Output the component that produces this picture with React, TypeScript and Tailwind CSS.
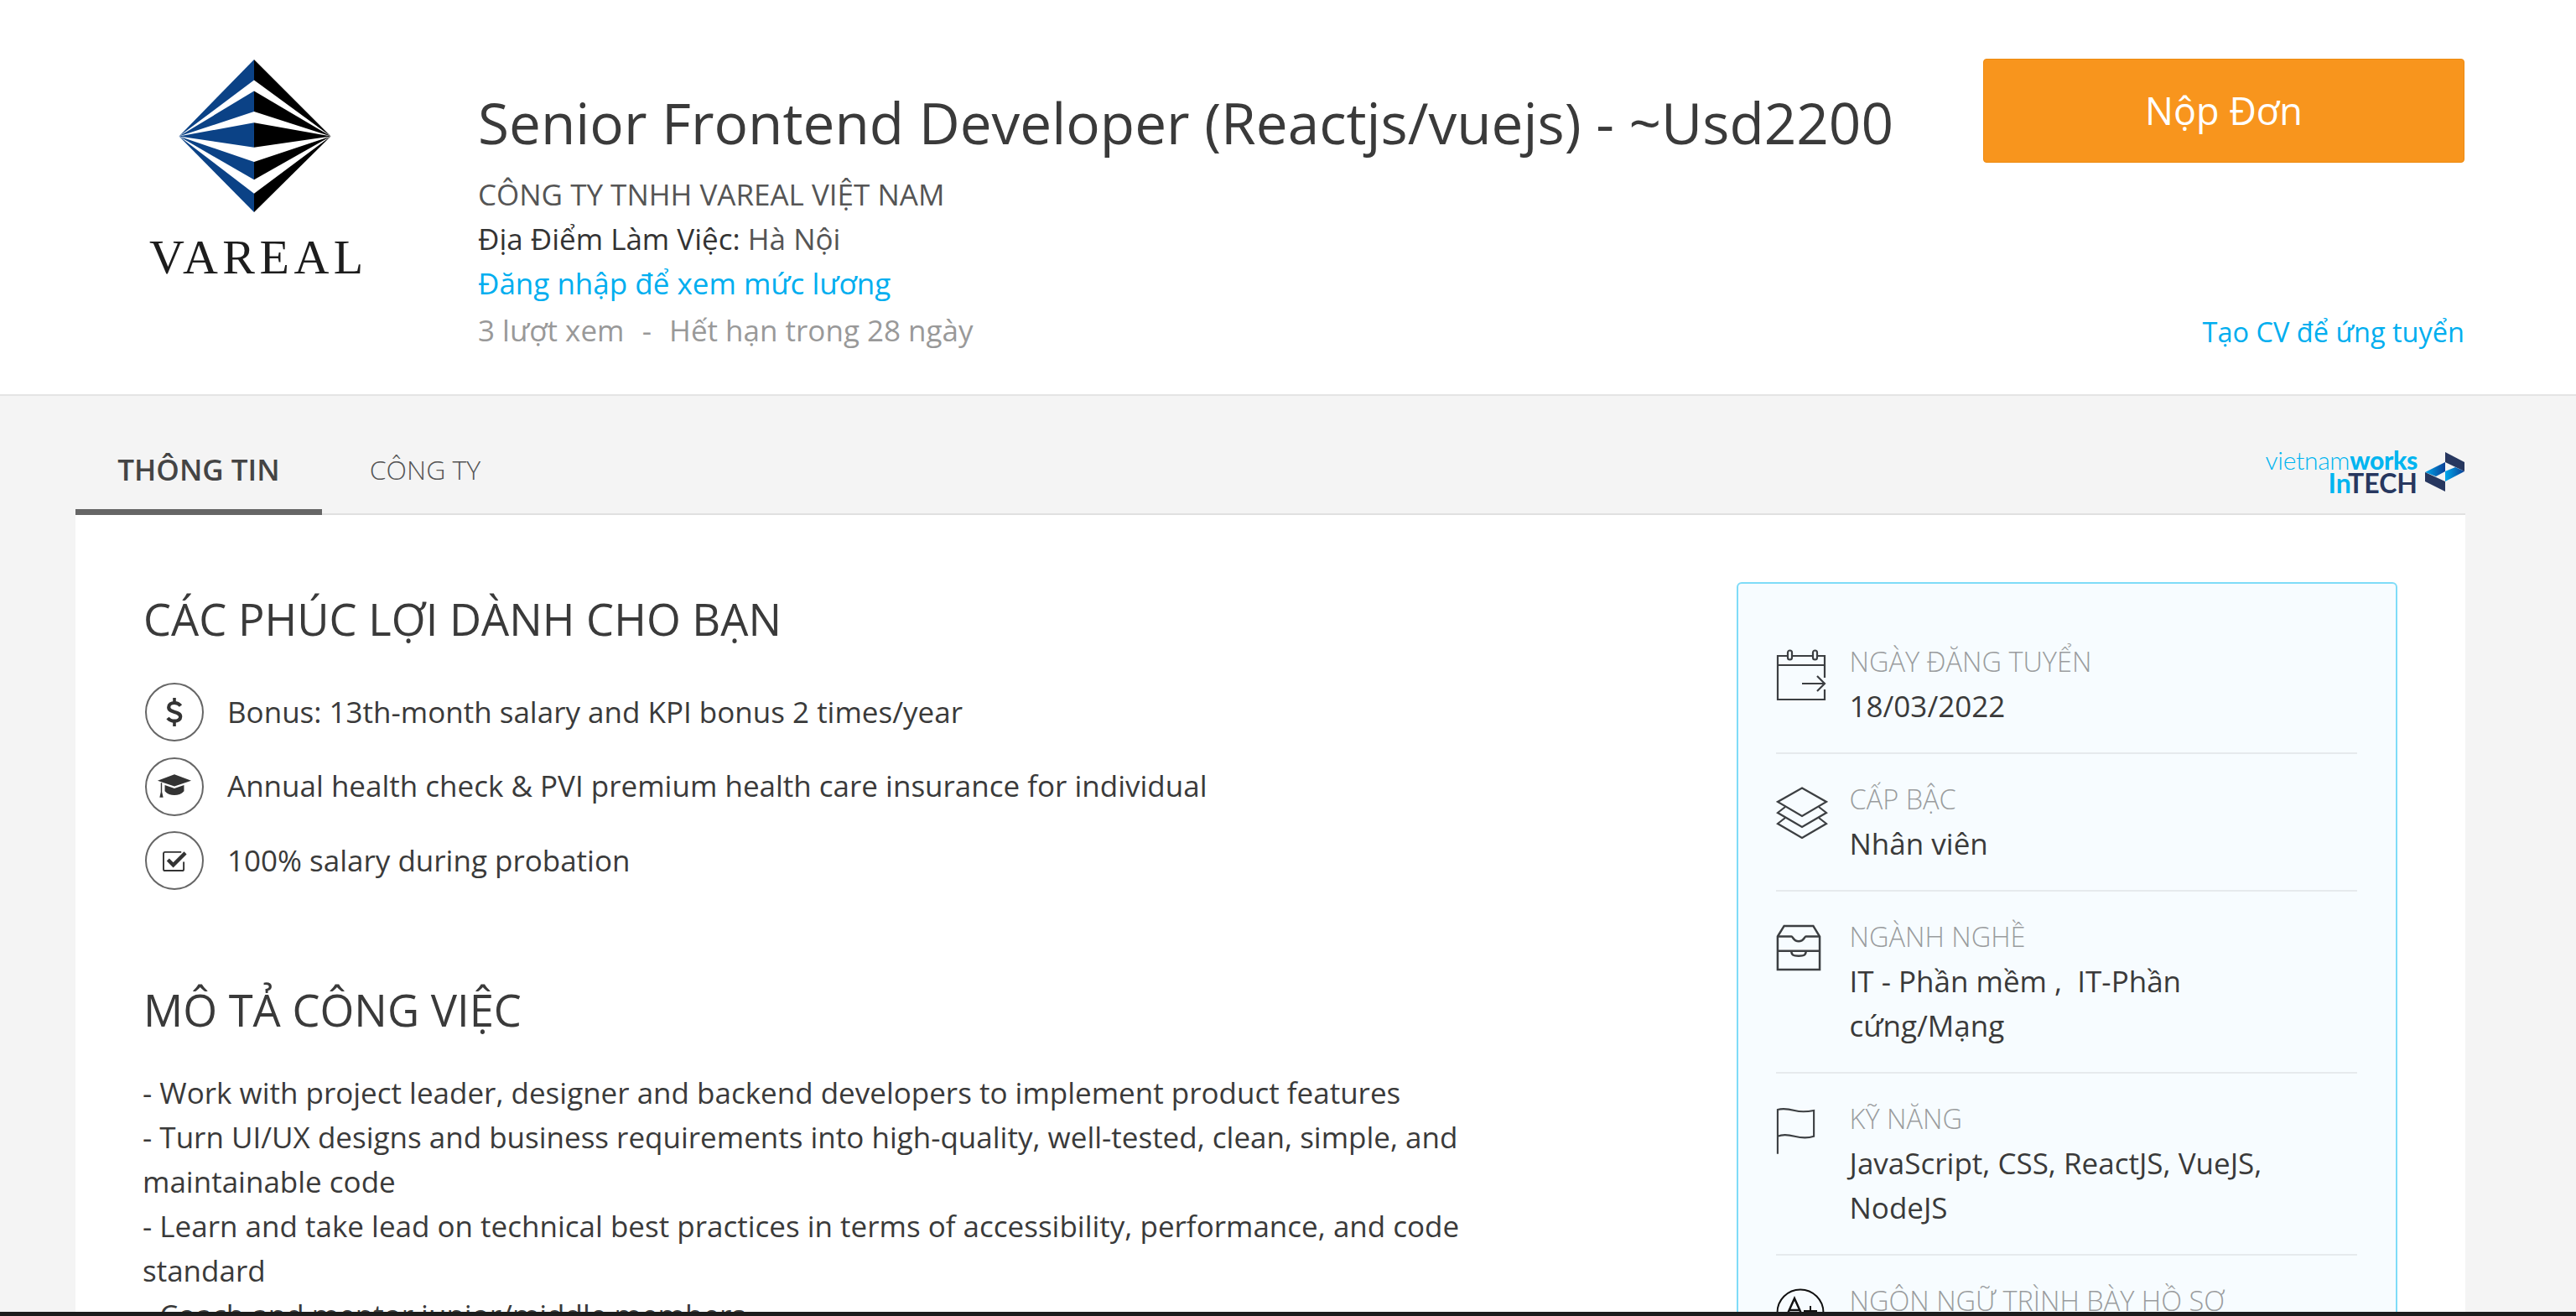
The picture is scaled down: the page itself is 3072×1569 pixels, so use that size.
import type { ReactNode } from "react";

const benefits = [
  { text: "Bonus: 13th-month salary and KPI bonus 2 times/year", icon: <DollarIcon /> },
  { text: "Annual health check & PVI premium health care insurance for individual", icon: <CapIcon /> },
  { text: "100% salary during probation", icon: <CheckIcon /> },
];

function DollarIcon() {
  return (
    <svg width="20" height="34" viewBox="0 0 20 34" fill="none" stroke="#333" strokeWidth="4.2">
      <path d="M10 0v6M10 28v6" strokeWidth="3.6" />
      <path d="M17.500 9.500C15.500 7 13 6 10 6 6 6 3.200 8 3.200 11.200c0 7 14 4.500 14 11.300 0 3.200-3 5.200-7.200 5.200-3.300 0-6-1.200-8-3.700" />
    </svg>
  );
}

function CapIcon() {
  return (
    <svg width="42" height="29" viewBox="0 0 44 30" fill="#333">
      <path d="M22 0 43 8 22 15 1 8z" />
      <path d="M10 13.500 22 17.500 34 13.500V21c-3 3.500-7.500 5-12 5s-9-1.500-12-5z" />
      <path d="M5 10.500h1.500V22l1.500 7H3.500l1.500-7z" />
    </svg>
  );
}

function CheckIcon() {
  return (
    <svg width="31" height="27" viewBox="0 0 32 28" fill="none">
      <path d="M27 15v9a2 2 0 0 1-2 2H4a2 2 0 0 1-2-2V5a2 2 0 0 1 2-2h20" stroke="#333" strokeWidth="2" />
      <path d="M7.500 12.500 14 19 29 4" stroke="#333" strokeWidth="4.500" />
    </svg>
  );
}

function CalendarIcon() {
  return (
    <svg width="60" height="62" viewBox="0 0 60 62" fill="none" stroke="#3c3f42" strokeWidth="2.200">
      <path d="M58 34V8H2v52h56V48" />
      <path d="M2 19h56" />
      <rect x="14" y="1.500" width="5" height="11" rx="2.500" fill="#f7fcff" />
      <rect x="44" y="1.500" width="5" height="11" rx="2.500" fill="#f7fcff" />
      <path d="M31 41h27M49 32l9 9-9 9" />
    </svg>
  );
}

function LayersIcon() {
  return (
    <svg width="62" height="62" viewBox="0 0 62 62" fill="none" stroke="#3c3f42" strokeWidth="2.200">
      <path d="M31 1.500 60 18 31 35 2 18z" />
      <path d="M11 24 2 31l29 17 29-17-9-7" />
      <path d="M11 37 2 44l29 17 29-17-9-7" />
    </svg>
  );
}

function DrawerIcon() {
  return (
    <svg width="54" height="56" viewBox="0 0 56 58" fill="none" stroke="#3c3f42" strokeWidth="2.600">
      <path d="M2 15 10 2h36l8 13v41H2z" />
      <path d="M2 15h17c2 0 2.500 6 9 6s7-6 9-6h17" />
      <path d="M2 33h52" />
      <path d="M19 33c0 5 2 6 9 6s9-1 9-6" />
    </svg>
  );
}

function FlagIcon() {
  return (
    <svg width="48" height="58" viewBox="0 0 50 58" fill="none" stroke="#3c3f42" strokeWidth="2.200">
      <path d="M2 58V3c7-2 13-1 21 1s13 2 24 0v32c-9 3-16 2-24 0S9 33 2 36" />
    </svg>
  );
}

function LanguageIcon() {
  return (
    <svg width="58" height="58" viewBox="0 0 58 58" fill="none" stroke="#111" strokeWidth="2">
      <circle cx="29" cy="29" r="27.500" />
      <path d="M13 32 22 12l9 20M16 26h12" strokeWidth="2.500" />
      <path d="M33 27h16M41 21v6M47 27c-2 7-8 12-14 14" />
    </svg>
  );
}

function VarealLogo() {
  return (
    <div className="flex w-[254px] flex-col">
      <svg className="ml-[37px]" width="182" height="182" viewBox="0 0 178 179">
        <path d="M88 0V24L0 90z" fill="#0b4286" />
        <path d="M88 37V61L0 90z" fill="#0b4286" />
        <path d="M88 74V103L0 90z" fill="#0b4286" />
        <path d="M88 120V141L0 90z" fill="#0b4286" />
        <path d="M88 157V179L0 90z" fill="#0b4286" />
        <path d="M88 0V24L178 90z" fill="#000" />
        <path d="M88 37V61L178 90z" fill="#000" />
        <path d="M88 74V103L178 90z" fill="#000" />
        <path d="M88 120V141L178 90z" fill="#000" />
        <path d="M88 157V179L178 90z" fill="#000" />
      </svg>
      <div className="mt-[30px] ml-[2px] font-['Liberation_Serif',serif] text-[58px] leading-[48px] tracking-[5.500px] whitespace-nowrap text-[#1d1d1d]">VAREAL</div>
    </div>
  );
}

function InTechLogo() {
  return (
    <div className="flex items-center gap-[9px]">
      <div className="flex flex-col items-end font-['Lato',sans-serif]">
        <div className="text-[30px] leading-[27px] tracking-[-0.01em] text-[#00b5f0]">
          <span className="font-light">vietnam</span>
          <span className="font-black">works</span>
        </div>
        <div className="text-[32px] leading-[28px] font-bold text-[#27375f]">
          <span className="text-[#00b5f0]">In</span>TECH
        </div>
      </div>
      <svg width="48" height="47" viewBox="0 0 48 47">
        <defs>
          <linearGradient id="band" x1="0" x2="1" y1="0" y2="0">
            <stop offset="0" stopColor="#00a8ec" />
            <stop offset="1" stopColor="#0b3f96" />
          </linearGradient>
        </defs>
        <path d="M24 0 47 12V23L24 12z" fill="#27375f" />
        <path d="M0 24 24 12V23L13 29z" fill="url(#band)" />
        <path d="M24 23 36 18 47 23 24 35z" fill="url(#band)" />
        <path d="M0 24 24 35V47L0 35z" fill="#27375f" />
      </svg>
    </div>
  );
}

function InfoRow({ icon, label, children, first }: { icon: ReactNode; label: string; children?: ReactNode; first?: boolean }) {
  return (
    <div className={`flex ${first ? "pb-[29px]" : "border-t-2 border-[#e6eaed] pt-[28px] pb-[29px]"}`}>
      <div className="w-[87.500px] shrink-0 pt-[11px]">{icon}</div>
      <div className="w-[570px]">
        <div className="text-[32.500px] leading-[52px] font-light whitespace-nowrap text-[#9a9c9e]">{label}</div>
        {children && <div className="text-[35px] leading-[53px] whitespace-pre-wrap text-[#3a3a3a]">{children}</div>}
      </div>
    </div>
  );
}

export default function App() {
  return (
    <div className="relative h-[1569px] overflow-hidden bg-[#f4f4f4] font-['Open_Sans',sans-serif] text-[#3a3a3a]">
      {/* Header */}
      <header className="flex h-[472px] border-b-2 border-[#e4e4e4] bg-white pr-[133px] pl-[176px]">
        <div className="pt-[71px]">
          <VarealLogo />
        </div>
        <div className="ml-[140px] flex-1 pt-[96px]">
          <h1 className="text-[67.500px] leading-[100px] whitespace-nowrap text-[#3a3a3a]">Senior Frontend Developer (Reactjs/vuejs) - ~Usd2200</h1>
          <div className="mt-[9px] text-[35px] leading-[53px] text-[#555]">CÔNG TY TNHH VAREAL VIỆT NAM</div>
          <div className="text-[35px] leading-[53px] text-[#333]">
            Địa Điểm Làm Việc: <span className="text-[#555]">Hà Nội</span>
          </div>
          <a className="block text-[35px] leading-[53px] text-[#00aeef]">Đăng nhập để xem mức lương</a>
          <div className="mt-[3px] text-[35px] leading-[53px] whitespace-pre text-[#999]">
            3 lượt xem<span className="mx-[3px]">  -  </span>Hết hạn trong 28 ngày
          </div>
        </div>
        <div className="flex w-[574px] shrink-0 flex-col pt-[70px]">
          <button className="h-[124px] w-full rounded-[4px] border border-[#ee8a0f] bg-[#f8951d] text-[45px] text-white">Nộp Đơn</button>
          <a className="mt-[180px] text-right text-[32.500px] leading-[44px] text-[#00aeef]">Tạo CV để ứng tuyển</a>
        </div>
      </header>

      {/* Tabs */}
      <div className="mx-[90px] mt-[54px] w-[2850px]">
        <div className="relative -mb-[2px] flex h-[88px] items-stretch justify-between">
          <div className="flex">
            <div className="flex w-[294px] items-center justify-center border-b-[7px] border-[#666] pb-[12px] text-[35px] font-semibold text-[#444]">THÔNG TIN</div>
            <div className="flex w-[246px] items-center justify-center pb-[21px] text-[32px] font-light text-[#555]">CÔNG TY</div>
          </div>
          <div className="pt-[9px]">
            <InTechLogo />
          </div>
        </div>

        {/* Content */}
        <div className="flex justify-between border-t-2 border-[#e0e0e0] bg-white pt-[80px] pr-[81px] pl-[80px]">
          <main className="w-[1650px]">
            <h2 className="mt-[8px] ml-[1px] text-[52.500px] leading-[72px] text-[#3a3a3a]">CÁC PHÚC LỢI DÀNH CHO BẠN</h2>
            <ul className="mt-[40px] ml-[3px] flex flex-col gap-[18.500px]">
              {benefits.map((b) => (
                <li key={b.text} className="flex h-[70px] items-center gap-[28px]">
                  <span className="flex h-[70px] w-[70px] shrink-0 items-center justify-center rounded-full border-2 border-[#666]">{b.icon}</span>
                  <span className="text-[35px] text-[#3a3a3a]">{b.text}</span>
                </li>
              ))}
            </ul>
            <h2 className="mt-[107px] ml-[1px] text-[52.500px] leading-[72px] text-[#3a3a3a]">MÔ TẢ CÔNG VIỆC</h2>
            <div className="mt-[36px] text-[35px] leading-[53px] text-[#3a3a3a]">
              <p>- Work with project leader, designer and backend developers to implement product features</p>
              <p>- Turn UI/UX designs and business requirements into high-quality, well-tested, clean, simple, and maintainable code</p>
              <p>- Learn and take lead on technical best practices in terms of accessibility, performance, and code standard</p>
              <p>- Coach and mentor junior/middle members</p>
            </div>
          </main>

          {/* Job summary */}
          <aside className="h-[900px] w-[788px] shrink-0 rounded-[6px] border-2 border-[#7fdcf8] bg-[#f7fcff] pt-[67px] pr-[46px] pl-[45px]">
            <InfoRow first icon={<CalendarIcon />} label="NGÀY ĐĂNG TUYỂN">18/03/2022</InfoRow>
            <InfoRow icon={<LayersIcon />} label="CẤP BẬC">Nhân viên</InfoRow>
            <InfoRow icon={<DrawerIcon />} label="NGÀNH NGHỀ">IT - Phần mềm ,  IT-Phần cứng/Mạng</InfoRow>
            <InfoRow icon={<FlagIcon />} label="KỸ NĂNG">JavaScript, CSS, ReactJS, VueJS, NodeJS</InfoRow>
            <InfoRow icon={<LanguageIcon />} label="NGÔN NGỮ TRÌNH BÀY HỒ SƠ" />
          </aside>
        </div>
      </div>

      {/* Dark strip along the bottom of the window */}
      <div className="absolute inset-x-0 bottom-0 h-[5px] bg-[#1c1c1c]" />
    </div>
  );
}
